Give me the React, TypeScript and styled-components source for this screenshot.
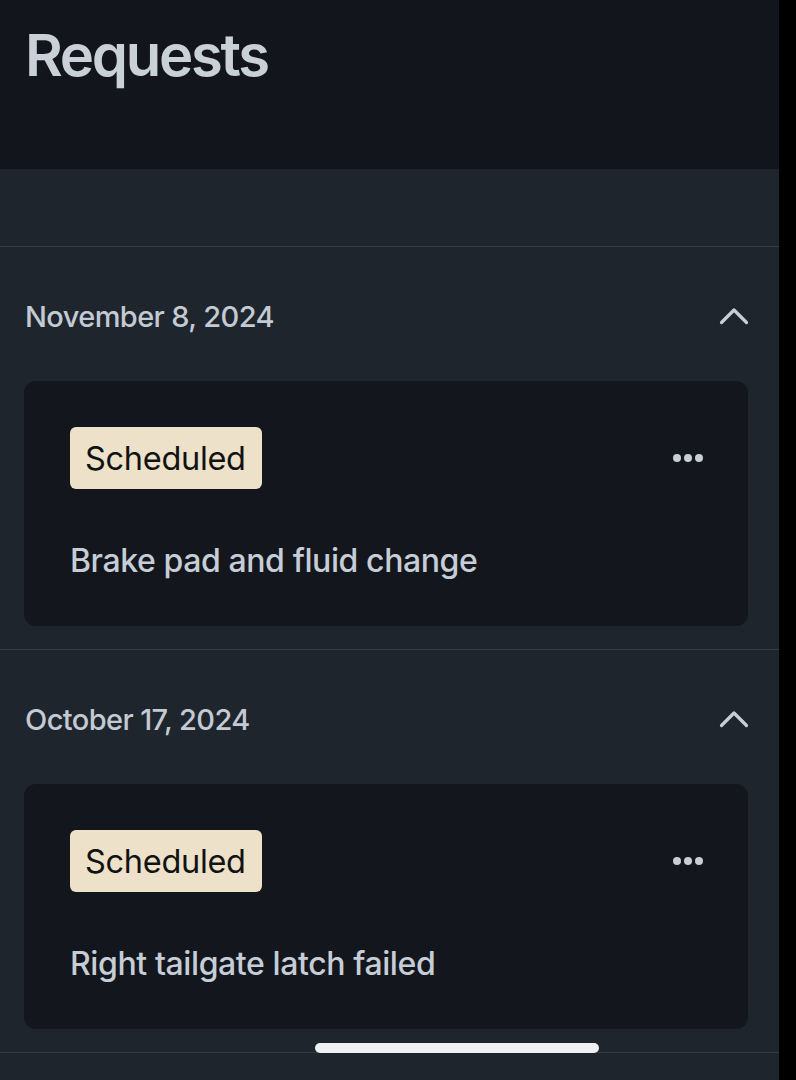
import styled, { createGlobalStyle } from "styled-components";

const GlobalStyle = createGlobalStyle`
  html, body {
    margin: 0;
    padding: 0;
    background: #000000;
  }
  body {
    font-family: Inter, "Noto Sans", "Liberation Sans", sans-serif;
    -webkit-font-smoothing: antialiased;
  }
`;

const Screen = styled.div`
  width: 779px;
  min-height: 1080px;
  background: #1f252d;
  display: flex;
  flex-direction: column;
`;

const Header = styled.header`
  height: 169px;
  background: #12161c;
  padding: 0 25px;
  box-sizing: border-box;
`;

const Title = styled.h1`
  margin: 0;
  padding-top: 19px;
  font-size: 58px;
  line-height: 72px;
  font-weight: 600;
  letter-spacing: -2.3px;
  color: #c9d0d8;
`;

const Band = styled.div`
  height: 77px;
  border-bottom: 1px solid #353c45;
`;

const Section = styled.section`
  padding: 0 31px 23px 24px;
  border-bottom: 1px solid #353c45;
`;

const SectionHead = styled.div`
  display: flex;
  align-items: center;
  justify-content: space-between;
  padding: 41px 0 37px 1px;
  height: 56px;
`;

const DateLabel = styled.span`
  font-size: 29px;
  font-weight: 500;
  letter-spacing: -0.6px;
  color: #c3cad3;
`;

const Chevron = styled.svg`
  width: 30px;
  height: 18px;
  margin-right: -1px;
`;

const Card = styled.div`
  background: #13171d;
  border-radius: 12px;
  padding: 46px 45px 45px 46px;
  display: flex;
  flex-direction: column;
  gap: 52px;
`;

const CardTop = styled.div`
  display: flex;
  align-items: center;
  justify-content: space-between;
`;

const Badge = styled.span`
  height: 62px;
  box-sizing: border-box;
  padding: 0 16px 0 15px;
  display: inline-flex;
  align-items: center;
  background: #ede1c9;
  border-radius: 6px;
  font-size: 32.5px;
  font-weight: 400;
  letter-spacing: -0.3px;
  color: #121212;
`;

const Dots = styled.div`
  display: flex;
  gap: 3px;
`;

const Dot = styled.span`
  width: 8px;
  height: 8px;
  border-radius: 50%;
  background: #c8ced6;
`;

const Description = styled.p`
  margin: 0;
  font-size: 32px;
  line-height: 40px;
  font-weight: 500;
  letter-spacing: -0.4px;
  color: #c6cdd6;
`;

const HomeIndicator = styled.div`
  position: fixed;
  left: 315px;
  top: 1043px;
  width: 284px;
  height: 10px;
  border-radius: 5px;
  background: #eef0f1;
`;

const requests = [
  { date: "November 8, 2024", status: "Scheduled", text: "Brake pad and fluid change" },
  { date: "October 17, 2024", status: "Scheduled", text: "Right tailgate latch failed" },
];

function App() {
  return (
    <>
      <GlobalStyle />
      <Screen>
        <Header>
          <Title>Requests</Title>
        </Header>
        <Band />
        {requests.map((r) => (
          <Section key={r.date}>
            <SectionHead>
              <DateLabel>{r.date}</DateLabel>
              <Chevron viewBox="0 0 30 18" fill="none">
                <polyline
                  points="2.5,15.5 15,3 27.5,15.5"
                  stroke="#c8ced6"
                  strokeWidth="3.2"
                  strokeLinecap="round"
                  strokeLinejoin="round"
                />
              </Chevron>
            </SectionHead>
            <Card>
              <CardTop>
                <Badge>{r.status}</Badge>
                <Dots>
                  <Dot />
                  <Dot />
                  <Dot />
                </Dots>
              </CardTop>
              <Description>{r.text}</Description>
            </Card>
          </Section>
        ))}
      </Screen>
      <HomeIndicator />
    </>
  );
}

export default App;
